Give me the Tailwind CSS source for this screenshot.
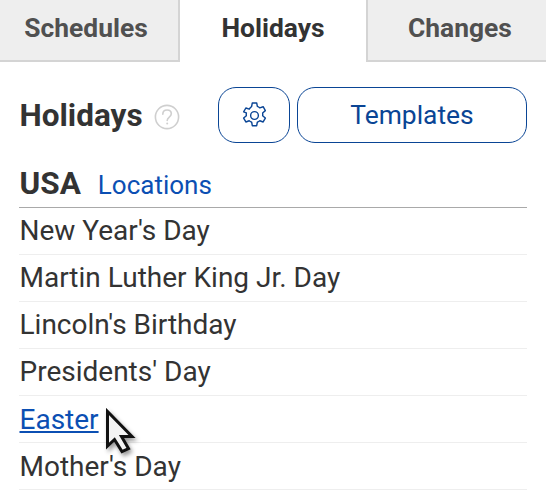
<!DOCTYPE html>
<html lang="en">
<head>
  <meta charset="UTF-8">
  <meta name="viewport" content="width=device-width, initial-scale=1.0">
  <title>Holidays</title>
  <script src="https://cdn.jsdelivr.net/npm/@tailwindcss/browser@4"></script>
</head>
<body class="bg-white overflow-hidden font-['Roboto',sans-serif] text-[#333333]">
  <div class="relative w-[546px] h-[491px] overflow-hidden">
    <!-- Tabs -->
    <div class="flex h-[62px] text-[26.4px] font-bold leading-[56px] text-center">
      <div class="w-[180px] pr-[6px] bg-[#eeeeee] text-[#505050] border-r-2 border-b-2 border-[#d4d4d4]">Schedules</div>
      <div class="w-[186px]">Holidays</div>
      <div class="w-[180px] pl-[6px] bg-[#eeeeee] text-[#505050] border-l-2 border-b-2 border-[#d4d4d4]">Changes</div>
    </div>

    <div class="pl-[19px] pr-[19px]">
      <!-- Heading -->
      <div class="flex items-center mt-[25px] h-[56px]">
        <h1 class="text-[31.5px] font-bold leading-none mt-[2px] ml-[0.5px]">Holidays</h1>
        <svg class="ml-[11px] mt-[3px]" width="26" height="26" viewBox="0 0 26 26" fill="none" stroke="#cfcfcf" stroke-width="1.6">
          <circle cx="13" cy="13" r="11.6"/>
          <path d="M8.8 10.2c0-2.6 1.9-4.2 4.3-4.2s4.2 1.5 4.2 3.8c0 3.2-4.1 3.3-4.1 6.6" stroke-linecap="round"/>
          <circle cx="13.2" cy="19.6" r="1" fill="#cfcfcf" stroke="none"/>
        </svg>
        <button class="ml-auto w-[72px] h-[56px] flex items-center justify-center rounded-[18px] border-[1.5px] border-[#0a4595] bg-white">
          <svg width="31" height="31" viewBox="0 0 24 24" fill="none" stroke="#0a4595" stroke-width="1.1" stroke-linejoin="round">
            <path d="M10.3 2.3h3.4l.5 2.7a7.3 7.3 0 0 1 1.9 1.1l2.6-.9 1.7 3-2.1 1.8a7.3 7.3 0 0 1 0 2.2l2.1 1.8-1.7 3-2.6-.9a7.3 7.3 0 0 1-1.9 1.1l-.5 2.7h-3.4l-.5-2.7a7.3 7.3 0 0 1-1.9-1.1l-2.6.9-1.7-3 2.1-1.8a7.3 7.3 0 0 1 0-2.2L3.6 9.2l1.7-3 2.6.9A7.3 7.3 0 0 1 9.8 5z"/>
            <circle cx="12" cy="12" r="3"/>
          </svg>
        </button>
        <button class="ml-[7px] w-[230px] h-[56px] rounded-[18px] border-[1.5px] border-[#0a4595] bg-white text-[#0a4595] text-[26.4px] leading-none">Templates</button>
      </div>

      <!-- Location -->
      <div class="flex items-baseline h-[42px] mt-[21px] pt-[1px] border-b border-[#a9a9a9] box-content">
        <span class="text-[31.5px] font-bold leading-[38px] ml-[0.5px]">USA</span>
        <a class="ml-[17px] text-[26px] leading-none text-[#0b4fb3]">Locations</a>
      </div>

      <!-- Holiday rows -->
      <ul class="text-[28px] leading-[46px]">
        <li class="h-[47px] border-b border-[#eeeeee] pl-[0.5px]">New Year's Day</li>
        <li class="h-[47px] border-b border-[#eeeeee] pl-[0.5px]">Martin Luther King Jr. Day</li>
        <li class="h-[47px] border-b border-[#eeeeee] pl-[0.5px]">Lincoln's Birthday</li>
        <li class="h-[47px] border-b border-[#eeeeee] pl-[0.5px]">Presidents' Day</li>
        <li class="h-[47px] border-b border-[#eeeeee] pl-[0.5px] leading-[47px]"><a class="text-[#0b4fb3] underline">Easter</a></li>
        <li class="h-[47px] border-b border-[#eeeeee] pl-[0.5px] leading-[47px]">Mother's Day</li>
      </ul>
    </div>

    <!-- Mouse cursor -->
    <svg class="absolute left-[104px] top-[408px] drop-shadow-[2px_3px_2px_rgba(0,0,0,0.4)]" width="32" height="48" viewBox="0 0 32 48">
      <path d="M3.5 3.5 L3.5 38 L10.5 31.5 L18 43.5 L24.5 40.5 L17.5 28.5 L28 28.5 Z" fill="#f4f4f4" stroke="#111111" stroke-width="3" stroke-linejoin="miter"/>
    </svg>
  </div>
</body>
</html>
